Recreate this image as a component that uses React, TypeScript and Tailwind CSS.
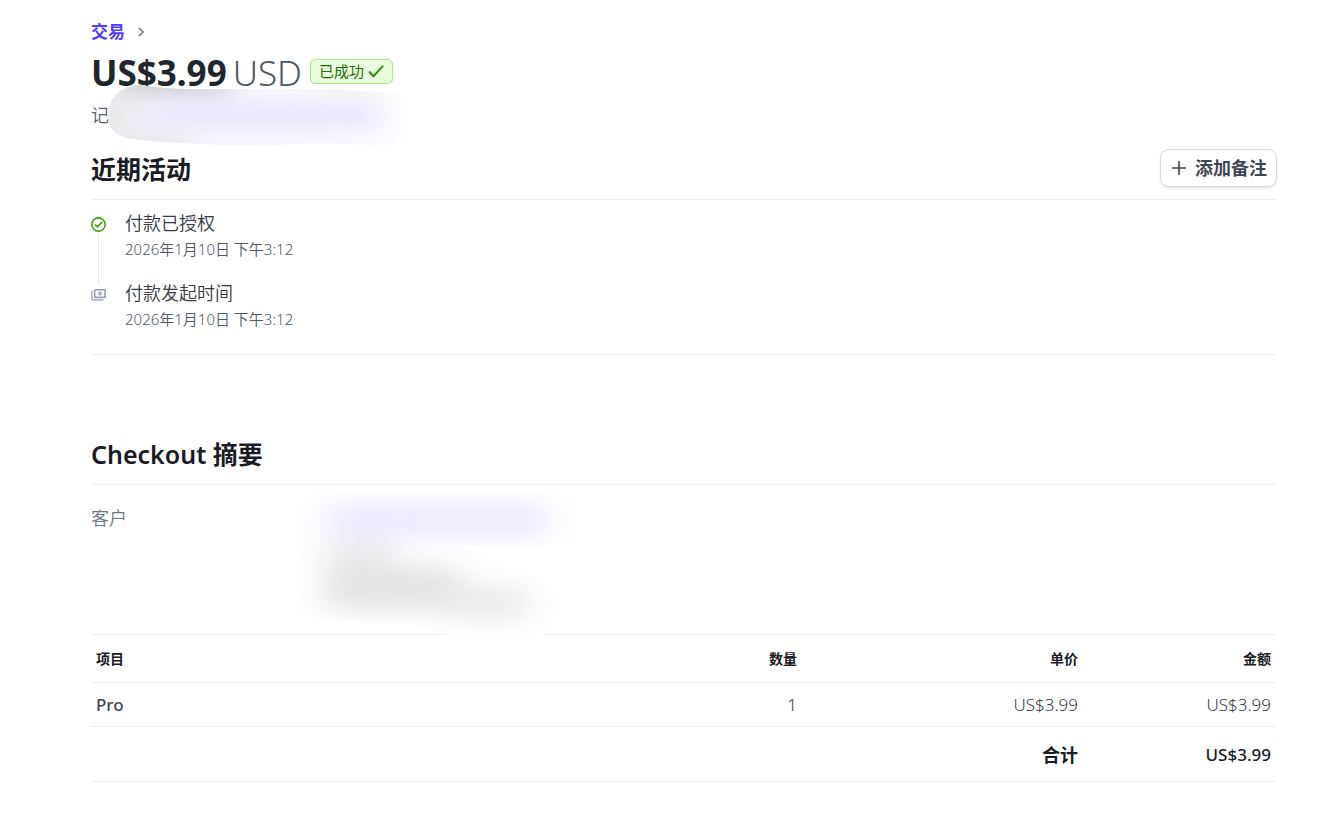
import React from 'react';

type Activity = { title: string; time: string; kind: 'success' | 'started' };

const activities: Activity[] = [
  { title: '付款已授权', time: '2026年1月10日 下午3:12', kind: 'success' },
  { title: '付款发起时间', time: '2026年1月10日 下午3:12', kind: 'started' },
];

const items = [{ name: 'Pro', quantity: '1', price: 'US$3.99', amount: 'US$3.99' }];

function CheckCircleIcon() {
  return (
    <svg className="size-[15px]" viewBox="0 0 16 16" fill="none" stroke="#3fa40d" strokeWidth="1.7" aria-hidden="true">
      <circle cx="8" cy="8" r="7.1" />
      <path d="M4.7 8.3l2.3 2.2 4.4-4.8" strokeLinecap="round" strokeLinejoin="round" />
    </svg>
  );
}

function CashIcon() {
  return (
    <svg className="size-[15px]" viewBox="0 0 16 16" fill="none" aria-hidden="true">
      <rect x="3.9" y="2.9" width="11.2" height="8.2" rx="0.8" stroke="#959fb2" strokeWidth="1.8" />
      <path d="M0.9 4.5v7.2c0 1.3.8 2.1 2.1 2.1h9.5" stroke="#b4bbc9" strokeWidth="1.8" strokeLinecap="round" />
      <ellipse cx="9.5" cy="7" rx="1.3" ry="1.6" stroke="#959fb2" strokeWidth="1.4" />
    </svg>
  );
}

function RecordMask() {
  return (
    <svg className="pointer-events-none absolute -top-[21px] left-[13px] h-[68px] w-[312px]" viewBox="0 0 312 68" aria-hidden="true">
      <defs>
        <clipPath id="record-shape">
          <path d="M4 34C4 16 16 4 36 3C60 7 90 8 120 7L235 7C255 11 290 8 302 14V64C280 66 235 60 200 62C160 64 110 64 82 61C60 61 42 58 28 57C12 55 4 46 4 34Z" />
        </clipPath>
        <linearGradient id="record-edge" x1="0" x2="1" y1="0" y2="0">
          <stop offset="0" stopColor="#e8e8ea" />
          <stop offset="0.2" stopColor="#f7f6fc" />
          <stop offset="0.8" stopColor="#fbfaff" />
          <stop offset="1" stopColor="#ffffff" />
        </linearGradient>
        <filter id="record-blur" filterUnits="userSpaceOnUse" x="-60" y="-60" width="440" height="200" colorInterpolationFilters="sRGB">
          <feGaussianBlur stdDeviation="16 10" />
        </filter>
      </defs>
      <g clipPath="url(#record-shape)">
        <rect width="312" height="68" fill="url(#record-edge)" />
        <g filter="url(#record-blur)">
          <rect x="20" y="-14" width="104" height="24" fill="#c4c4ca" />
          <rect x="215" y="-8" width="70" height="14" fill="#e4f3dd" />
          <rect x="46" y="20" width="232" height="27" fill="#eae6fd" />
          <rect x="20" y="60" width="60" height="14" fill="#dcdce0" />
          <rect x="300" y="-10" width="60" height="88" fill="#ffffff" />
        </g>
      </g>
    </svg>
  );
}

function CustomerMask() {
  return (
    <svg className="pointer-events-none absolute top-[5px] left-[199px] h-[150px] w-[290px]" viewBox="0 0 290 150" aria-hidden="true">
      <defs>
        <clipPath id="customer-shape">
          <path d="M0 0H285V56H164C190 63 230 73 250 90C275 105 285 130 260 146C220 154 180 150 160 146C145 142 135 138 122 134C80 134 30 132 0 124Z" />
        </clipPath>
        <filter id="customer-blur" filterUnits="userSpaceOnUse" x="-60" y="-60" width="420" height="290" colorInterpolationFilters="sRGB">
          <feGaussianBlur stdDeviation="17 12" />
        </filter>
      </defs>
      <g clipPath="url(#customer-shape)">
        <rect x="15" y="50" width="245" height="110" rx="30" fill="#ffffff" />
        <g filter="url(#customer-blur)">
          <rect x="36" y="14" width="222" height="32" fill="#ece8fe" />
          <rect x="34" y="50" width="72" height="56" fill="#ececed" />
          <rect x="36" y="76" width="134" height="44" fill="#e2e4e6" />
          <rect x="155" y="96" width="84" height="34" fill="#ebebec" />
        </g>
      </g>
    </svg>
  );
}

export default function App() {
  return (
    <main className="min-h-screen bg-white pt-5 pr-[49px] pb-8 pl-[91px] font-['Noto_Sans','Noto_Sans_CJK_SC',sans-serif] text-[#414552]">
      <nav aria-label="面包屑" className="flex h-6 items-center gap-3">
        <a href="#transactions" className="text-[17px] leading-6 font-bold text-[#533afd]">交易</a>
        <svg className="h-3 w-2" viewBox="0 0 8 12" fill="none" stroke="#6c7688" strokeWidth="1.6" aria-hidden="true">
          <path d="M2 2l4 4-4 4" />
        </svg>
      </nav>

      <header>
        <div className="mt-1 flex h-[50px] items-center">
          <h1 className="flex items-center gap-1.5 text-[35px] leading-[50px] font-bold text-[#21252c]">
            US$3.99 <span className="font-[350] text-[#505866]">USD</span>
          </h1>
          <span className="mb-1 ml-2 flex h-[25px] items-center gap-1 rounded-[5px] border border-[#a6eb84] bg-[#eafcdd] px-2 text-[15px] leading-5 text-[#217005]">
            已成功
            <svg className="size-4" viewBox="0 0 16 16" fill="none" stroke="#2b8a09" strokeWidth="2" aria-hidden="true">
              <path d="M1 8.5l4.5 4.7L15 2.8" />
            </svg>
          </span>
        </div>
        <div className="relative mt-[5px] h-6">
          <p className="text-[18px] leading-6 font-[350] text-[#596171]">记</p>
          <RecordMask />
        </div>
      </header>

      <section className="mt-3">
        <div className="flex h-[61px] items-center justify-between border-b border-[#ebeef1]">
          <h2 className="text-[25px] leading-8 font-bold text-[#1a1b25]">近期活动</h2>
          <button
            type="button"
            className="mb-0.5 flex h-9 items-center gap-2 rounded-lg bg-white pr-[9px] pl-2.5 text-[18px] leading-6 font-bold text-[#414552] shadow-[0_0_0_1px_#d5d9df,0_2px_4px_rgba(0,0,0,0.12)]"
          >
            <svg className="size-4" viewBox="0 0 16 16" fill="none" stroke="#414552" strokeWidth="1.6" aria-hidden="true">
              <path d="M8 1v14M1 8h14" />
            </svg>
            添加备注
          </button>
        </div>

        <ol className="flex flex-col gap-[18px] border-b border-[#ebeef1] pt-2.5 pb-[22px]">
          {activities.map((activity, index) => (
            <li key={activity.title} className="flex gap-[19px]">
              <div className="-mb-[18px] flex w-[15px] flex-col items-center pt-[7px]">
                {activity.kind === 'success' ? <CheckCircleIcon /> : <CashIcon />}
                {index < activities.length - 1 && <span className="mt-0.5 mb-[-4px] w-px grow bg-[#e3e6ea]" />}
              </div>
              <div>
                <p className="text-[18px] leading-[26px] font-[350] text-[#353a44]">{activity.title}</p>
                <p className="text-[15px] leading-[26px] font-[350] text-[#505866]">{activity.time}</p>
              </div>
            </li>
          ))}
        </ol>
      </section>

      <section className="mt-[69px]">
        <div className="flex h-[61px] items-center border-b border-[#ebeef1]">
          <h2 className="text-[25px] leading-8 font-semibold text-[#1a1b25]">Checkout 摘要</h2>
        </div>

        <table className="w-full table-fixed border-collapse text-right">
          <caption className="relative z-10 h-[149px] pt-[21px] text-left">
            <span className="text-[18px] leading-6 font-[350] text-[#6c7688]">客户</span>
            <CustomerMask />
          </caption>
          <colgroup>
            <col />
            <col className="w-[15%]" />
            <col className="w-[281px]" />
            <col className="w-[193px]" />
          </colgroup>
          <thead>
            <tr className="h-12 border-y border-[#ebeef1] text-[14px] leading-5 text-[#1a1b25]">
              <th scope="col" className="px-[5px] text-left font-bold">项目</th>
              <th scope="col" className="px-[5px] font-bold">数量</th>
              <th scope="col" className="px-[5px] font-bold">单价</th>
              <th scope="col" className="px-[5px] font-bold">金额</th>
            </tr>
          </thead>
          <tbody>
            {items.map((item) => (
              <tr key={item.name} className="h-11 border-b border-[#ebeef1] text-[17px] leading-6 font-[350] text-[#353a44]">
                <td className="px-[5px] text-left font-medium text-[#414552]">{item.name}</td>
                <td className="px-[5px]">{item.quantity}</td>
                <td className="px-[5px]">{item.price}</td>
                <td className="px-[5px]">{item.amount}</td>
              </tr>
            ))}
          </tbody>
          <tfoot>
            <tr className="h-[55px] border-b border-[#ebeef1] text-[17px] leading-6 text-[#1a1b25]">
              <td colSpan={2} />
              <th scope="row" className="px-[5px] pt-0.5 text-[18px] font-bold">合计</th>
              <td className="px-[5px] pt-0.5 font-medium">US$3.99</td>
            </tr>
          </tfoot>
        </table>
      </section>
    </main>
  );
}
